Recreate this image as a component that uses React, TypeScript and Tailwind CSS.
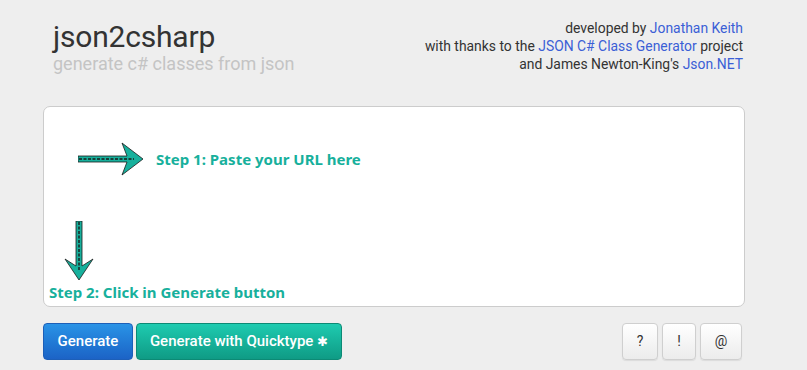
import React from 'react';

const RightArrow = () => (
  <svg width="66" height="34" viewBox="0 0 66 34" className="shrink-0">
    <path
      d="M0 14 L49 14 L44 1 L65 17 L44 33 L49 20 L0 20 Z"
      fill="#17b09c"
      stroke="#1a1a1a"
      strokeWidth="0.8"
    />
    <line x1="1" y1="17" x2="56" y2="17" stroke="#1a1a1a" strokeWidth="1.4" strokeDasharray="3 1.5" />
  </svg>
);

const DownArrow = () => (
  <svg width="30" height="60" viewBox="0 0 30 60" className="shrink-0">
    <path
      d="M12 0 L18 0 L18 45 L29 38 L15 59 L1 38 L12 45 Z"
      fill="#17b09c"
      stroke="#1a1a1a"
      strokeWidth="0.8"
    />
    <line x1="15" y1="1" x2="15" y2="50" stroke="#1a1a1a" strokeWidth="1.4" strokeDasharray="3 1.5" />
  </svg>
);

const App: React.FC = () => {
  return (
    <div className="w-[807px] h-[370px] bg-[#eeeeee] overflow-hidden font-['Roboto',sans-serif]">
      <div className="ml-[43px] w-[702px] pt-[19px]">
        {/* Header */}
        <div className="flex justify-between">
          <div className="pl-[10px]">
            <h1 className="text-[30px] leading-[36px] text-[#333333] tracking-[-0.2px]">json2csharp</h1>
            <p className="text-[18px] leading-[18px] text-[#c4c4c4]">generate c# classes from json</p>
          </div>
          <div className="text-right text-[13.9px] leading-[18px] text-[#333333] pr-[2px]">
            <p>
              developed by <span className="text-[#3b5fd6]">Jonathan Keith</span>
            </p>
            <p>
              with thanks to the <span className="text-[#3b5fd6]">JSON C# Class Generator</span> project
            </p>
            <p>
              and James Newton-King's <span className="text-[#3b5fd6]">Json.NET</span>
            </p>
          </div>
        </div>

        {/* Input area */}
        <div className="mt-[33px] h-[201px] w-[702px] bg-white border border-[#cccccc] rounded-[7px] flex flex-col justify-between pb-[4px] font-['Noto_Sans',sans-serif] font-bold text-[#17b09c]">
          <div className="flex items-center gap-[12px] pl-[34px] pt-[35px]">
            <RightArrow />
            <span className="text-[15px]">Step 1: Paste your URL here</span>
          </div>
          <div className="flex flex-col pl-[5px]">
            <div className="pl-[15px]">
              <DownArrow />
            </div>
            <span className="text-[15px] leading-[20px] mt-[1px]">Step 2: Click in Generate button</span>
          </div>
        </div>

        {/* Buttons */}
        <div className="flex justify-between mt-[16px]">
          <div className="flex gap-[3px]">
            <button className="h-[37px] w-[90px] rounded-[4px] border border-[#1d5fb8] bg-gradient-to-b from-[#2a93e6] to-[#1c63c6] text-white text-[15px] font-medium">
              Generate
            </button>
            <button className="h-[37px] w-[206px] rounded-[4px] border border-[#0c8a75] bg-gradient-to-b from-[#1ecbb0] to-[#0f9b85] text-white text-[15px] font-medium">
              Generate with Quicktype <span className="text-[13px]">✱</span>
            </button>
          </div>
          <div className="flex gap-[4px] pr-[3px]">
            {['?', '!', '@'].map((c, i) => (
              <button
                key={c}
                className={`h-[37px] ${i === 2 ? 'w-[42px]' : i === 1 ? 'w-[34px]' : 'w-[36px]'} rounded-[4px] border border-[#cfcfcf] bg-gradient-to-b from-white to-[#ececec] text-[#333] text-[14px] shadow-[0_1px_1px_rgba(0,0,0,0.08)]`}
              >
                {c}
              </button>
            ))}
          </div>
        </div>
      </div>
    </div>
  );
};

export default App;
